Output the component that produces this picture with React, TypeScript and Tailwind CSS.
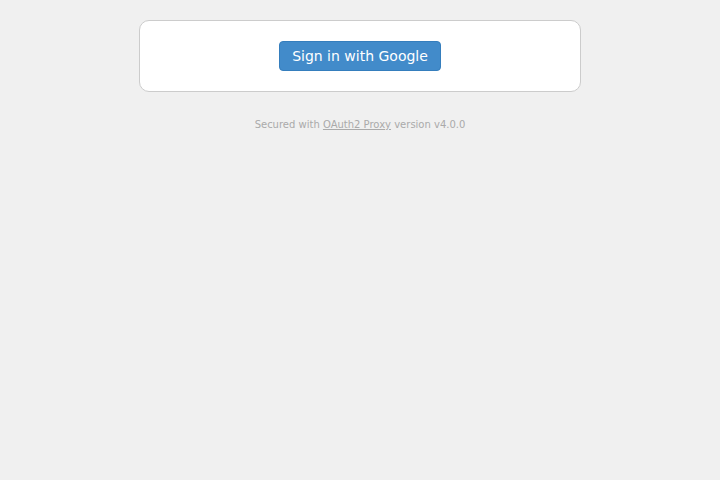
export default function App() {
  return (
    <div className="min-h-screen bg-[#f0f0f0] px-5 pt-5 font-['DejaVu_Sans',sans-serif] text-[14px] leading-5 text-[#333]">
      <main className="mx-auto max-w-[442px] rounded-[10px] border border-[#ccc] bg-white p-5 text-center">
        <form onSubmit={(event) => event.preventDefault()}>
          <button
            type="submit"
            className="cursor-pointer rounded-[4px] border border-[#357ebd] bg-[#428bca] px-3 py-1 align-top text-[14px] leading-5 text-white hover:bg-[#3071a9]"
          >
            Sign in with Google
          </button>
        </form>
      </main>
      <footer className="mt-6 text-center text-[10px] leading-[18px] text-[#aaa]">
        Secured with{" "}
        <a href="#oauth2-proxy" className="underline">
          OAuth2 Proxy
        </a>{" "}
        version v4.0.0
      </footer>
    </div>
  );
}
